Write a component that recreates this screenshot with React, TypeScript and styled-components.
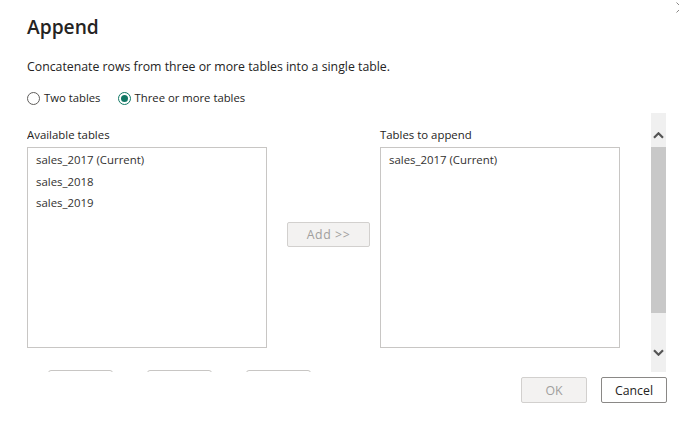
import React, { useState } from 'react';
import styled, { createGlobalStyle } from 'styled-components';

const teal = '#117865';
const textColor = '#252423';

const GlobalStyle = createGlobalStyle`
  html, body {
    margin: 0;
    padding: 0;
    background: #ffffff;
    overflow: hidden;
  }
  body {
    font-family: "Open Sans", "Segoe UI", "Liberation Sans", sans-serif;
    color: ${textColor};
  }
`;

const Dialog = styled.div`
  position: relative;
  width: 679px;
  height: 426px;
  box-sizing: border-box;
  padding: 14px 12px 0 27px;
  background: #ffffff;
`;

const CloseButton = styled.button`
  position: absolute;
  top: 2px;
  left: 676px;
  width: 11px;
  height: 11px;
  padding: 0;
  border: none;
  background: none;
  display: flex;
`;

const Title = styled.h1`
  margin: 0;
  font-size: 19.2px;
  line-height: 26px;
  font-weight: 600;
  color: ${textColor};
`;

const Description = styled.p`
  margin: 17px 0 0;
  font-size: 12.3px;
  line-height: 20px;
  color: ${textColor};
`;

const RadioGroup = styled.div`
  display: flex;
  gap: 17px;
  margin-top: 11px;
  height: 20px;
`;

const RadioOption = styled.label`
  display: flex;
  align-items: center;
  gap: 4px;
  font-size: 11.3px;
  line-height: 20px;
  color: ${textColor};
  cursor: pointer;
`;

const RadioCircle = styled.span<{ $checked: boolean }>`
  width: 13px;
  height: 13px;
  margin-top: 1px;
  box-sizing: border-box;
  border-radius: 50%;
  border: 1px solid ${(p) => (p.$checked ? teal : '#605e5c')};
  display: flex;
  align-items: center;
  justify-content: center;

  &::after {
    content: '';
    display: ${(p) => (p.$checked ? 'block' : 'none')};
    width: 7px;
    height: 7px;
    border-radius: 50%;
    background: ${teal};
  }
`;

const ScrollArea = styled.div`
  display: flex;
  height: 259px;
  margin-top: 5px;
  margin-right: 1px;
`;

const ScrollContent = styled.div`
  flex: 1;
  overflow: hidden;
  padding-top: 12px;
`;

const Columns = styled.div`
  display: flex;
  align-items: flex-start;
`;

const ListColumn = styled.div<{ $width: number }>`
  width: ${(p) => p.$width}px;
  display: flex;
  flex-direction: column;
`;

const ListLabel = styled.div`
  font-size: 11.4px;
  line-height: 20px;
  margin-bottom: 2px;
  color: ${textColor};
`;

const ListBox = styled.ul`
  margin: 0;
  list-style: none;
  height: 201px;
  box-sizing: border-box;
  border: 1px solid #c8c6c4;
  padding: 1px 8px;
`;

const ListItem = styled.li`
  font-size: 11.4px;
  line-height: 21.5px;
  color: #323130;
  white-space: nowrap;
`;

const Button = styled.button<{ $width: number }>`
  width: ${(p) => p.$width}px;
  height: 26px;
  box-sizing: border-box;
  border-radius: 2px;
  padding: 0;
  font-family: inherit;
  font-size: 12.3px;
  font-weight: 500;
  border: 1px solid #8a8886;
  background: #ffffff;
  color: ${textColor};

  &:disabled {
    border-color: #d2d0ce;
    background: #f3f2f1;
    color: #a19f9d;
  }
`;

const AddButton = styled(Button)`
  height: 25px;
  margin: 97px 10px 0 20px;
  letter-spacing: 0.6px;
`;

const HiddenActions = styled.div`
  display: flex;
  gap: 34px;
  margin-top: 22px;
  padding-left: 21px;
`;

const GhostButton = styled.div`
  width: 65px;
  height: 26px;
  box-sizing: border-box;
  border: 1px solid #c8c6c4;
  border-radius: 3px;
`;

const Scrollbar = styled.div`
  width: 15px;
  display: flex;
  flex-direction: column;
  background: #f0f0f0;
`;

const ArrowButton = styled.div<{ $height: number; $top?: number; $bottom?: number }>`
  height: ${(p) => p.$height}px;
  box-sizing: border-box;
  padding-top: ${(p) => p.$top || 0}px;
  padding-bottom: ${(p) => p.$bottom || 0}px;
  display: flex;
  align-items: center;
  justify-content: center;
`;

const Thumb = styled.div`
  height: 166px;
  background: #c8c8c8;
`;

const Track = styled.div`
  flex: 1;
`;

const Footer = styled.div`
  display: flex;
  justify-content: flex-end;
  gap: 14px;
  margin-top: 5px;
`;

const Chevron = ({ down }: { down?: boolean }) => (
  <svg width="11" height="7" viewBox="0 0 11 7">
    <path
      d={down ? 'M1 1.2 L5.5 5.7 L10 1.2' : 'M1 5.8 L5.5 1.3 L10 5.8'}
      fill="none"
      stroke="#555555"
      strokeWidth="2.2"
    />
  </svg>
);

const App: React.FC = () => {
  const [mode, setMode] = useState<'two' | 'many'>('many');
  const available = ['sales_2017 (Current)', 'sales_2018', 'sales_2019'];
  const toAppend = ['sales_2017 (Current)'];

  return (
    <>
      <GlobalStyle />
      <Dialog>
        <CloseButton aria-label="Close">
          <svg width="11" height="11" viewBox="0 0 11 11">
            <path d="M0.5 0.5 L10.5 10.5 M10.5 0.5 L0.5 10.5" stroke="#8a8886" strokeWidth="1" />
          </svg>
        </CloseButton>
        <Title>Append</Title>
        <Description>Concatenate rows from three or more tables into a single table.</Description>
        <RadioGroup>
          <RadioOption onClick={() => setMode('two')}>
            <RadioCircle $checked={mode === 'two'} />
            Two tables
          </RadioOption>
          <RadioOption onClick={() => setMode('many')}>
            <RadioCircle $checked={mode === 'many'} />
            Three or more tables
          </RadioOption>
        </RadioGroup>

        <ScrollArea>
          <ScrollContent>
            <Columns>
              <ListColumn $width={240}>
                <ListLabel>Available tables</ListLabel>
                <ListBox>
                  {available.map((t) => (
                    <ListItem key={t}>{t}</ListItem>
                  ))}
                </ListBox>
              </ListColumn>
              <AddButton $width={83} disabled>
                Add &gt;&gt;
              </AddButton>
              <ListColumn $width={240}>
                <ListLabel>Tables to append</ListLabel>
                <ListBox>
                  {toAppend.map((t) => (
                    <ListItem key={t}>{t}</ListItem>
                  ))}
                </ListBox>
              </ListColumn>
            </Columns>
            <HiddenActions>
              <GhostButton />
              <GhostButton />
              <GhostButton />
            </HiddenActions>
          </ScrollContent>
          <Scrollbar>
            <ArrowButton $height={34} $top={11}>
              <Chevron />
            </ArrowButton>
            <Thumb />
            <Track />
            <ArrowButton $height={32} $bottom={8}>
              <Chevron down />
            </ArrowButton>
          </Scrollbar>
        </ScrollArea>

        <Footer>
          <Button $width={66} disabled>
            OK
          </Button>
          <Button $width={66}>Cancel</Button>
        </Footer>
      </Dialog>
    </>
  );
};

export default App;
